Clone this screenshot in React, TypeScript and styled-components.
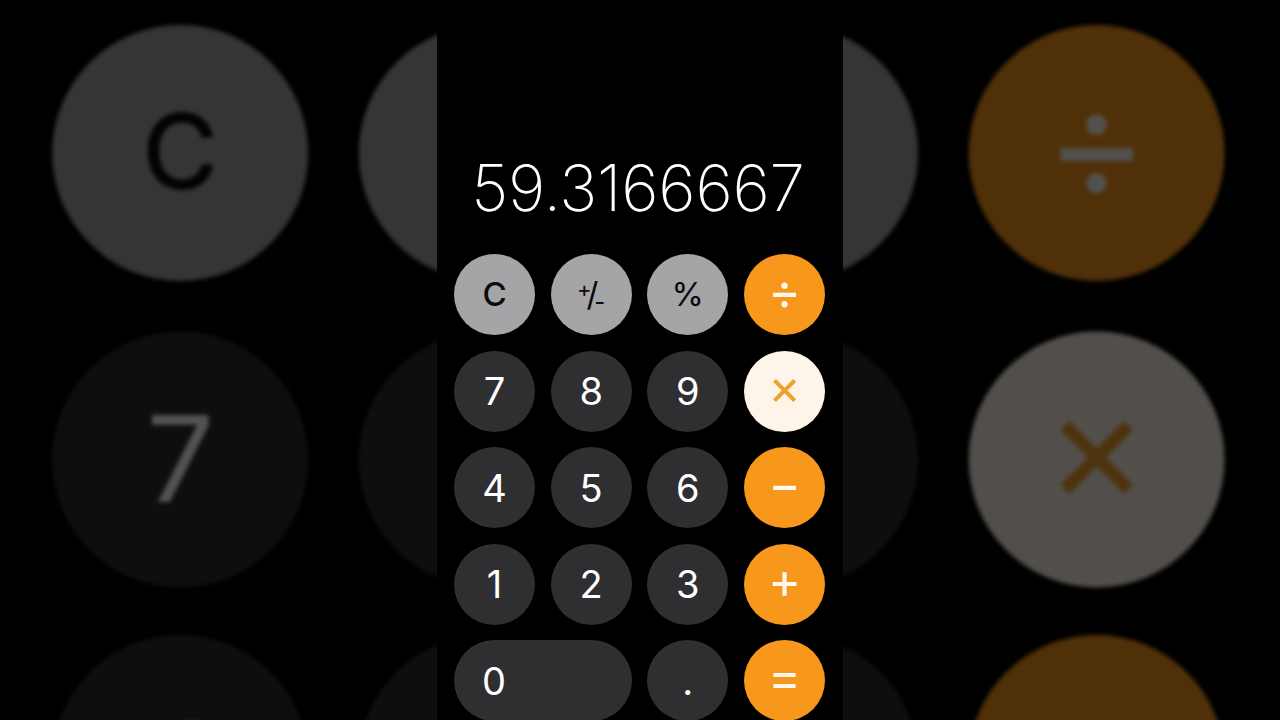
import React from 'react'
import styled, { createGlobalStyle } from 'styled-components'

type Tone = 'light' | 'dark' | 'accent' | 'active'

const KEY_COLORS: Record<Tone, { bg: string; fg: string }> = {
  light: { bg: '#a5a5a7', fg: '#0a0a0a' },
  dark: { bg: '#2f2e30', fg: '#ffffff' },
  accent: { bg: '#f7971b', fg: '#fff8ee' },
  active: { bg: '#fdf5e9', fg: '#f0a02c' }
}

const GlobalStyle = createGlobalStyle`
  html, body {
    margin: 0;
    height: 100%;
    background: #000;
    overflow: hidden;
  }
`

const Stage = styled.div`
  position: relative;
  width: 1280px;
  height: 720px;
  overflow: hidden;
  background: #000;
  font-family: Inter, 'Liberation Sans', sans-serif;
`

const Backdrop = styled.div`
  position: absolute;
  inset: 0;
  display: flex;
  justify-content: center;
  opacity: 0.32;
  filter: blur(0.7px);
  transform: scale(3.16);
  transform-origin: 640px 360px;
`

const Foreground = styled.div`
  position: absolute;
  inset: 0;
  display: flex;
  justify-content: center;
`

const Phone = styled.div<{ $solid?: boolean }>`
  width: 406px;
  height: 720px;
  box-sizing: border-box;
  padding: 153px 18px 0 17px;
  background: ${({ $solid }) => ($solid ? '#000' : 'transparent')};
  display: flex;
  flex-direction: column;
`

const Display = styled.div`
  flex: 0 0 101px;
  box-sizing: border-box;
  padding-right: 3px;
  display: flex;
  justify-content: center;
  color: #fff;
  font-size: 64px;
  font-weight: 200;
  line-height: 70px;
  letter-spacing: -0.2px;
  white-space: nowrap;
`

const Keypad = styled.div`
  flex: none;
  display: grid;
  grid-template-columns: repeat(4, 81px);
  grid-auto-rows: 81px;
  column-gap: 15.67px;
  row-gap: 15.5px;
`

const Key = styled.div<{ $tone: Tone; $wide?: boolean }>`
  display: flex;
  align-items: center;
  justify-content: ${({ $wide }) => ($wide ? 'flex-start' : 'center')};
  grid-column: ${({ $wide }) => ($wide ? 'span 2' : 'span 1')};
  padding-left: ${({ $wide }) => ($wide ? '28px' : '0')};
  border-radius: 41px;
  background: ${({ $tone }) => KEY_COLORS[$tone].bg};
  color: ${({ $tone }) => KEY_COLORS[$tone].fg};
  font-size: 38px;
  font-weight: 400;
  line-height: 1;
`

const ClearLabel = styled.span`
  font-size: 33px;
  font-weight: 500;
`

const PercentLabel = styled.span`
  font-size: 33px;
`

const OperatorLabel = styled.span`
  font-size: 50px;
  font-weight: 400;
  transform: translateY(-4px);
`

const SignLabel = styled.span`
  display: flex;
  align-items: center;
  font-weight: 400;
`

const SignPart = styled.span<{ $shift: number; $size: number; $gap: number }>`
  font-size: ${({ $size }) => $size}px;
  margin-left: ${({ $gap }) => $gap}px;
  transform: translateY(${({ $shift }) => $shift}px);
`

type KeyDef = { label: string; tone: Tone; wide?: boolean; kind?: 'clear' | 'percent' | 'op' | 'sign' }

const KEYS: KeyDef[] = [
  { label: 'C', tone: 'light', kind: 'clear' },
  { label: '+/-', tone: 'light', kind: 'sign' },
  { label: '%', tone: 'light', kind: 'percent' },
  { label: '÷', tone: 'accent', kind: 'op' },
  { label: '7', tone: 'dark' },
  { label: '8', tone: 'dark' },
  { label: '9', tone: 'dark' },
  { label: '×', tone: 'active', kind: 'op' },
  { label: '4', tone: 'dark' },
  { label: '5', tone: 'dark' },
  { label: '6', tone: 'dark' },
  { label: '−', tone: 'accent', kind: 'op' },
  { label: '1', tone: 'dark' },
  { label: '2', tone: 'dark' },
  { label: '3', tone: 'dark' },
  { label: '+', tone: 'accent', kind: 'op' },
  { label: '0', tone: 'dark', wide: true },
  { label: '.', tone: 'dark' },
  { label: '=', tone: 'accent', kind: 'op' }
]

function KeyLabel({ def }: { def: KeyDef }) {
  if (def.kind === 'clear') return <ClearLabel>{def.label}</ClearLabel>
  if (def.kind === 'percent') return <PercentLabel>{def.label}</PercentLabel>
  if (def.kind === 'op') return <OperatorLabel>{def.label}</OperatorLabel>
  if (def.kind === 'sign') {
    return (
      <SignLabel>
        <SignPart $size={22} $shift={-6} $gap={0}>+</SignPart>
        <SignPart $size={33} $shift={0} $gap={-5}>/</SignPart>
        <SignPart $size={24} $shift={7} $gap={-4}>-</SignPart>
      </SignLabel>
    )
  }
  return <>{def.label}</>
}

function Calculator({ solid }: { solid?: boolean }) {
  return (
    <Phone $solid={solid}>
      <Display>59.3166667</Display>
      <Keypad>
        {KEYS.map((def) => (
          <Key key={def.label} $tone={def.tone} $wide={def.wide}>
            <KeyLabel def={def} />
          </Key>
        ))}
      </Keypad>
    </Phone>
  )
}

export default function App() {
  return (
    <Stage>
      <GlobalStyle />
      <Backdrop>
        <Calculator />
      </Backdrop>
      <Foreground>
        <Calculator solid />
      </Foreground>
    </Stage>
  )
}
